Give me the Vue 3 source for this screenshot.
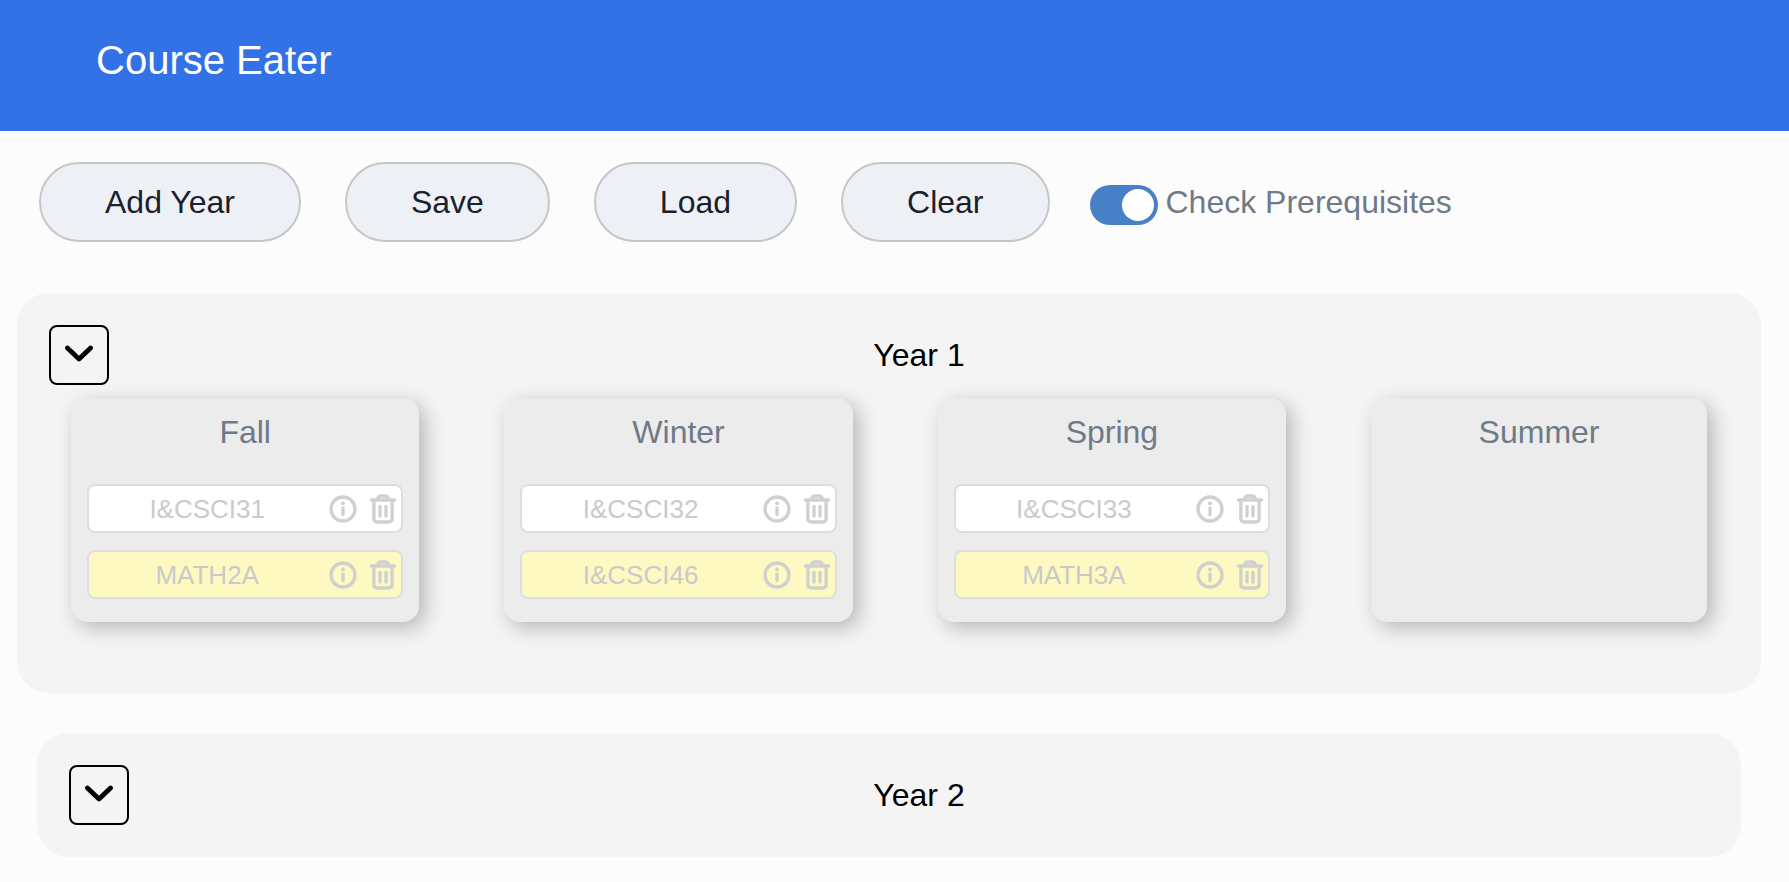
<script setup>
import { ref } from 'vue'

const checkPrerequisites = ref(true)
const actions = ['Add Year', 'Save', 'Load', 'Clear']

const years = ref([
  {
    name: 'Year 1',
    open: true,
    quarters: [
      { name: 'Fall', courses: [{ id: 'I&CSCI31' }, { id: 'MATH2A', warning: true }] },
      { name: 'Winter', courses: [{ id: 'I&CSCI32' }, { id: 'I&CSCI46', warning: true }] },
      { name: 'Spring', courses: [{ id: 'I&CSCI33' }, { id: 'MATH3A', warning: true }] },
      { name: 'Summer', courses: [] },
    ],
  },
  { name: 'Year 2', open: false, quarters: [] },
])
</script>

<template>
  <div class="page">
    <header class="banner">
      <h1>Course Eater</h1>
    </header>

    <div class="toolbar">
      <button v-for="action in actions" :key="action" type="button" class="action">{{ action }}</button>
      <div class="switch-field">
        <input id="prereq" v-model="checkPrerequisites" type="checkbox" role="switch" class="switch" />
        <label for="prereq">Check Prerequisites</label>
      </div>
    </div>

    <main class="years">
      <section v-for="year in years" :key="year.name" class="year" :class="{ open: year.open }">
        <div class="year-head">
          <button type="button" class="toggle" :aria-label="'Toggle ' + year.name" :aria-expanded="year.open">
            <svg viewBox="0 0 32 32" aria-hidden="true">
              <path d="M4.4 9 L16 20 L27.6 9" />
            </svg>
          </button>
          <h2>{{ year.name }}</h2>
        </div>
        <div v-if="year.open" class="quarters">
          <article v-for="quarter in year.quarters" :key="quarter.name" class="quarter">
            <h3>{{ quarter.name }}</h3>
            <ul>
              <li v-for="course in quarter.courses" :key="course.id" class="course" :class="{ warning: course.warning }">
                <span class="course-name">{{ course.id }}</span>
                <button type="button" class="icon" :aria-label="'About ' + course.id">
                  <svg viewBox="0 0 32 32" aria-hidden="true">
                    <circle cx="16" cy="16" r="12" />
                    <path d="M16 15V21.5" />
                    <circle class="dot" cx="16" cy="10.3" r="1.9" />
                  </svg>
                </button>
                <button type="button" class="icon" :aria-label="'Remove ' + course.id">
                  <svg viewBox="0 0 32 32" aria-hidden="true">
                    <path d="M4.4 7H27.6M10.5 6.5C10.8 4 12 3 14 3H18C20 3 21.2 4 21.5 6.5M6.9 7V25.5C6.9 28 8 29 10.5 29H21.5C24 29 25.1 28 25.1 25.5V7M13 13.5V23M19 13.5V23" />
                  </svg>
                </button>
              </li>
            </ul>
          </article>
        </div>
      </section>
    </main>
  </div>
</template>

<style>
body {
  background: #fcfcfc;
}
</style>

<style scoped>
.page {
  font-family: "Liberation Sans", Arial, sans-serif;
  font-size: 32px;
  line-height: 48px;
  color: #000;
}
h1,
h2,
h3 {
  margin: 0;
  font-size: 32px;
  font-weight: 400;
}
button {
  font: inherit;
  box-sizing: border-box;
}
.banner {
  box-sizing: border-box;
  height: 131px;
  padding: 36px 96px;
  background: #3371e6;
}
.banner h1 {
  color: #fff;
  font-size: 40px;
}
.toolbar {
  display: flex;
  align-items: center;
  gap: 44px;
  padding: 31px 39px 51px;
}
.action {
  padding: 14px 64px;
  border: 2px solid #c6c6c6;
  border-radius: 40px;
  background: #edf1f6;
  color: #1c202b;
}
.switch-field {
  display: flex;
  align-items: center;
  gap: 8px;
  margin-left: -4px;
  color: #6f7a88;
}
.switch {
  appearance: none;
  display: flex;
  align-items: center;
  box-sizing: border-box;
  width: 68px;
  height: 40px;
  margin: 6px 0 0;
  padding: 4px;
  border-radius: 20px;
  background: #a0aec0;
}
.switch::before {
  content: "";
  width: 32px;
  height: 32px;
  border-radius: 50%;
  background: #fff;
}
.switch:checked {
  justify-content: flex-end;
  background: #4880c8;
}
.years {
  display: flex;
  flex-direction: column;
  gap: 40px;
}
.year {
  margin: 0 48px 0 37px;
  padding: 32px;
  border-radius: 32px;
  background: #f4f4f4;
}
.year.open {
  margin: 0 28px 0 17px;
  padding-bottom: 71px;
}
.year-head {
  display: flex;
  align-items: center;
}
.year-head h2 {
  flex: 1;
  text-align: center;
}
.toggle {
  display: flex;
  align-items: center;
  justify-content: center;
  width: 60px;
  height: 60px;
  padding: 0;
  border: 2px solid #000;
  border-radius: 8px;
  background: none;
}
.toggle svg {
  width: 32px;
  height: 32px;
  fill: none;
  stroke: #000;
  stroke-width: 4.8;
  stroke-linecap: round;
  stroke-linejoin: round;
}
.quarters {
  display: grid;
  grid-template-columns: repeat(3, minmax(0, 28fr)) minmax(0, 27fr);
  gap: 85px;
  padding: 13px 22px 0;
}
.quarter {
  padding: 10px 16px 23px;
  border-radius: 16px;
  background: #ececec;
  box-shadow: 6px 6px 20px rgba(0, 0, 0, 0.25);
}
.quarter h3 {
  color: #6f7a88;
  text-align: center;
}
.quarter ul {
  display: flex;
  flex-direction: column;
  gap: 17px;
  margin: 28px 0 0;
  padding: 0;
  list-style: none;
}
.course {
  display: flex;
  align-items: center;
  gap: 8px;
  box-sizing: border-box;
  height: 49px;
  padding: 0 2px 0 6px;
  border: 2px solid #dedede;
  border-radius: 8px;
  background: #fff;
  color: #cacaca;
  font-size: 26px;
}
.course.warning {
  background: #fef8c1;
}
.course-name {
  flex: 1;
  text-align: center;
}
.icon {
  display: flex;
  padding: 0;
  border: 0;
  background: none;
}
.icon svg {
  width: 32px;
  height: 32px;
  fill: none;
  stroke: #d0d0d0;
  stroke-width: 3.3;
  stroke-linecap: round;
  stroke-linejoin: round;
}
.icon .dot {
  fill: #d0d0d0;
  stroke: none;
}
</style>
